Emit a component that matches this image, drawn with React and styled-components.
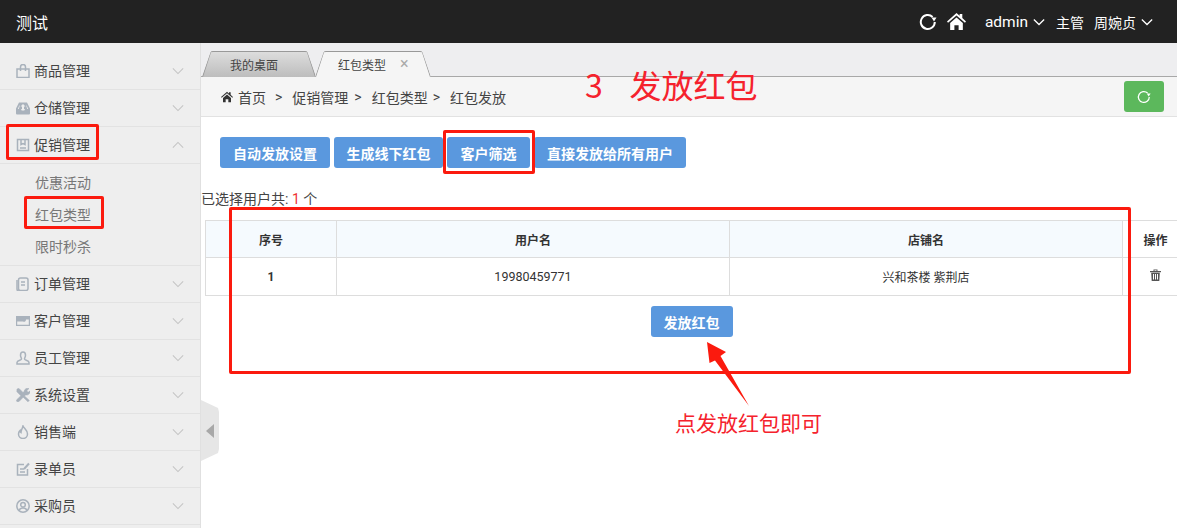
import React from "react";
import styled, { createGlobalStyle } from "styled-components";

const Global = createGlobalStyle`
  html, body { margin: 0; padding: 0; height: 528px; overflow: hidden; background: #fff; }
  * { box-sizing: border-box; }
  body { font-family: Roboto, "Noto Sans CJK SC", sans-serif; font-size: 14px; color: #333; }
`;

const Page = styled.div`position: relative; width: 1177px; height: 528px; overflow: hidden; display: flex; flex-direction: column;`;
const Header = styled.header`height: 43px; flex: none; background: #222; color: #fff; display: flex; align-items: center; padding: 0 24px 0 16px;`;
const Brand = styled.div`font-size: 16px; flex: 1;`;
const HeaderIcons = styled.div`display: flex; align-items: center; gap: 10px; margin-right: 19px;`;
const HeaderText = styled.span`display: inline-flex; align-items: center; font-size: ${p => p.$size || 14}px; margin-left: ${p => p.$gap || 0}px; gap: 5px;`;
const Body = styled.div`flex: 1; display: flex; min-height: 0;`;
const Sidebar = styled.aside`width: 201px; flex: none; background: #eee; border-right: 1px solid #e0e0e0; padding-top: 10px;`;
const MenuRow = styled.div`height: 37px; padding: 0 16px 1px 16px; display: flex; align-items: center; border-bottom: 1px solid #e2e2e2; color: #444; font-size: 14px; line-height: 1;`;
const MenuIcon = styled.svg`width: 14px; height: 14px; flex: none; margin-right: 4px; fill: none; stroke: #a9b2bc; stroke-width: 1.5;`;
const MenuLabel = styled.span`flex: 1;`;
const Chevron = styled.svg`width: ${p => p.$width || 12}px; height: 8px; fill: none; stroke: ${p => p.$c || "#c4c4c4"}; stroke-width: ${p => p.$w || 1.2}; flex: none;`;
const SubMenu = styled.div`height: 102px; padding-top: 3px; border-bottom: 1px solid #e2e2e2;`;
const SubItem = styled.div`height: 32px; line-height: 32px; padding-left: 35px; color: #777; font-size: 14px;`;
const Main = styled.main`flex: 1; min-width: 0; display: flex; flex-direction: column; position: relative;`;
const TabBar = styled.div`height: 34px; flex: none; background: #eeeef0; border-bottom: 1px solid #a8a8a8; display: flex; align-items: flex-end; padding-left: 1px; position: relative;`;
const Tab = styled.div`
  height: 26px; position: relative; display: flex; align-items: center; justify-content: ${p => p.$active ? "flex-start" : "center"};
  width: ${p => p.$active ? 116 : 114}px; margin-right: ${p => p.$active ? 0 : -1}px; margin-bottom: -1px;
  padding-left: ${p => p.$active ? 23 : 0}px; padding-right: ${p => p.$active ? 0 : 10}px; font-size: 12px; color: #444; z-index: ${p => p.$active ? 2 : 1};
  background: ${p => p.$active ? "#f5f5f5" : "linear-gradient(#dedede, #bdbdbd)"};
  clip-path: polygon(0 100%, 9px 0, calc(100% - 9px) 0, 100% 100%);
`;
const TabOutline = styled.svg`position: absolute; inset: 0; width: 100%; height: 100%; fill: none; stroke: #999;`;
const TabClose = styled.span`position: absolute; left: 85px; top: 2px; color: #aaa; font-size: 16px; line-height: 22px;`;
const Crumbs = styled.div`height: 40px; flex: none; background: #f5f5f5; border-bottom: 1px solid #e2e2e2; display: flex; align-items: center; padding: 0 13px 0 20px; color: #444; font-size: 14px;`;
const CrumbHome = styled.span`display: inline-flex; margin-right: 5px;`;
const CrumbText = styled.span`margin-right: ${p => p.$m}px; white-space: pre;`;
const Spacer = styled.div`flex: 1;`;
const GreenBtn = styled.div`width: 40px; height: 31px; background: #5cb85c; border-radius: 3px; display: flex; align-items: center; justify-content: center;`;
const Content = styled.div`flex: 1; position: relative; padding-top: 20px;`;
const Toolbar = styled.div`display: flex; gap: 4px; padding-left: 19px;`;
const Btn = styled.div`height: 31px; width: ${p => p.$w}px; background: #5a98de; color: #fff; border-radius: 3px; font-size: 14px; font-weight: 700; display: flex; align-items: center; justify-content: center;`;
const Selected = styled.div`margin-top: 22px; height: 18px; line-height: 18px; font-size: 14px; color: #444;`;
const Count = styled.span`color: #e33;`;
const TableWrap = styled.div`margin: 12px 0 0 4px; width: 985px;`;
const Table = styled.table`border-collapse: collapse; table-layout: fixed; width: 983px; font-size: 12px; color: #333;`;
const Th = styled.th`height: 37px; border: 1px solid #ddd; background: ${p => p.$plain ? "#fff" : "#f5fafe"}; font-weight: 700; font-size: 12px; padding: 0;`;
const Td = styled.td`height: 38px; border: 1px solid #ddd; text-align: center; padding: 0; font-weight: ${p => p.$bold ? 700 : 400}; font-size: ${p => p.$size || 12}px;`;
const SendRow = styled.div`display: flex; justify-content: center; width: 973px; margin: 10px 0 0 0;`;
const Collapse = styled.div`position: absolute; left: 0; top: 357px; width: 18px; height: 61px; background: #e6e6e6; clip-path: polygon(0 0, 17px 8px, 18px 12px, 18px 49px, 17px 53px, 0 61px); display: flex; align-items: center; padding-left: 5px;`;
const CollapseArrow = styled.div`width: 0; height: 0; border-style: solid; border-width: 7px 8px 7px 0; border-color: transparent #a8a8a8 transparent transparent;`;

const RedBox = styled.div`position: absolute; left: ${p => p.$x}px; top: ${p => p.$y}px; width: ${p => p.$w}px; height: ${p => p.$h}px; border: 3px solid #fb1a0e; border-radius: 2px; pointer-events: none; z-index: 5;`;
const Note = styled.div`position: absolute; left: ${p => p.$x}px; top: ${p => p.$y}px; color: #f5222d; font-size: ${p => p.$s}px; line-height: 1; white-space: pre; word-spacing: -0.5px; font-family: "Noto Sans CJK SC", sans-serif; z-index: 5;`;
const Arrow = styled.svg`position: absolute; left: 700px; top: 335px; width: 60px; height: 80px; z-index: 5; fill: #fb1a0e; stroke: none;`;

const icons = {
  bag: <><rect x="1" y="5" width="12" height="8.500" /><path d="M4.500 7V3a2.500 2.500 0 0 1 5 0v4" /></>,
  inbox: <path fill="#a9b2bc" stroke="none" fillRule="evenodd" d="M3 1.500h8l3 6v5a1 1 0 0 1-1 1H1a1 1 0 0 1-1-1v-5zM7 3L4.500 5.500h1.500V8h2V5.500h1.500zM1.800 8l1.500-3.500h.5L2.800 8H5l.7 1.500h2.600L9 8h2.200l-1-3.500h.5L12.200 8z" />,
  book: <><rect x="1.500" y="1.500" width="11" height="11" /><path d="M5 1.500v5l2-1 2 1v-5M4 10h6" /></>,
  doc: <><rect x="2.500" y="1" width="9.500" height="12.500" rx="2" /><path d="M1 3v9a2 2 0 0 0 2 2M5 5h4M5 8h4" /></>,
  card: <path fill="#a9b2bc" stroke="none" d="M0 2h14v10H0zM1.200 5.500v5.300h11.600V5.500H10a2 2 0 0 1-3 2H1.200z" />,
  user: <><path d="M4.500 4.200a2.500 3.200 0 0 1 5 0c0 1.800-1 2.600-1 3.800 0 1.300 4.500 1.200 4.500 3.500v1.500H1v-1.500C1 9.200 5.500 9.300 5.500 8c0-1.200-1-2-1-3.800z" /></>,
  tools: <path fill="#a9b2bc" stroke="#a9b2bc" strokeWidth="0.600" d="M1 1l2-.5 4 4 1.200-1.200A3.500 3.500 0 0 1 13 .5L10.800 2.700l.5 1 1.300.4L14 3a3.500 3.500 0 0 1-4.300 3.900L8.500 8l4.800 4.500-1.300 1.300L7.200 9.200 3 13.500 1 13.800.5 12l4.400-4.300-4-4z" />,
  fire: <path d="M7 1c1 2.500 4.500 4 4.500 8A4.500 4.500 0 0 1 7 13.500 4.500 4.500 0 0 1 2.500 9c0-1.800.8-2.800 1.500-3.500 0 1 .5 1.700 1 2C5 5 6.500 3.500 7 1z" />,
  edit: <><path d="M11.500 7v6h-10V2.500H8M4 7h4M4 10h5" /><path d="M8 7l5-5.500" strokeWidth="2" /></>,
  circle: <><circle cx="7" cy="7" r="6.200" /><circle cx="7" cy="5.700" r="2.300" /><path d="M3 11.500c.7-2 2-2.600 4-2.600s3.300.6 4 2.600" /></>,
};

const Down = () => <Chevron viewBox="0 0 14 9"><path d="M1 1.500l6 6 6-6" /></Chevron>;
const Up = () => <Chevron viewBox="0 0 14 9"><path d="M1 7.500l6-6 6 6" /></Chevron>;
const HeaderChevron = () => <Chevron viewBox="0 0 14 9" $c="#fff" $w={1.500}><path d="M1 1.500l6 6 6-6" /></Chevron>;

const Row = ({ icon, label, up }) => (
  <MenuRow>
    <MenuIcon viewBox="0 0 14 14">{icons[icon]}</MenuIcon>
    <MenuLabel>{label}</MenuLabel>
    {up ? <Up /> : <Down />}
  </MenuRow>
);

const Home = ({ width, height, color }) => (
  <svg width={width} height={height} viewBox="0 0 18 16" fill={color}>
    <path d="M9 0l3 2.600V1h2.500v3.800L18 8l-1 1.100L9 2.200 1 9.100 0 8z" />
    <path d="M3 9.400L9 4.200l6 5.200V16h-4v-4.500H7V16H3z" />
  </svg>
);
const Refresh = ({ size, color, w = 2 }) => (
  <svg width={size} height={size} viewBox="0 0 18 18" fill="none" stroke={color} strokeWidth={w}>
    <path d="M15.800 9A7 7 0 1 1 13.600 3.900" />
    <path d="M12.500 4.500L17.500 4.500 15 8.500z" strokeWidth="0" fill={color} />
  </svg>
);
const Trash = () => (
  <svg width="11" height="12" viewBox="0 0 11 12" fill="#555">
    <path d="M0 2h11v1.200H0zM3.500 2V.5h4V2h-1V1.300h-2V2zM1.200 3.700h8.600l-.5 8.300H1.700zM3 5v5.500h1V5zm2 0v5.500h1V5zm2 0v5.500h1V5z" />
  </svg>
);

export default function App() {
  return (
    <Page>
      <Global />
      <Header>
        <Brand>测试</Brand>
        <HeaderIcons>
          <Refresh size={18} color="#fff" />
          <Home width={19} height={17} color="#fff" />
        </HeaderIcons>
        <HeaderText $size={15.500}>admin<HeaderChevron /></HeaderText>
        <HeaderText $gap={11}>主管</HeaderText>
        <HeaderText $gap={10}>周婉贞<HeaderChevron /></HeaderText>
      </Header>
      <Body>
        <Sidebar>
          <Row icon="bag" label="商品管理" />
          <Row icon="inbox" label="仓储管理" />
          <Row icon="book" label="促销管理" up />
          <SubMenu>
            <SubItem>优惠活动</SubItem>
            <SubItem>红包类型</SubItem>
            <SubItem>限时秒杀</SubItem>
          </SubMenu>
          <Row icon="doc" label="订单管理" />
          <Row icon="card" label="客户管理" />
          <Row icon="user" label="员工管理" />
          <Row icon="tools" label="系统设置" />
          <Row icon="fire" label="销售端" />
          <Row icon="edit" label="录单员" />
          <Row icon="circle" label="采购员" />
        </Sidebar>
        <Main>
          <TabBar>
            <Tab>我的桌面
              <TabOutline viewBox="0 0 114 26" preserveAspectRatio="none"><path d="M0.500 26L8.500 1.500Q9 0.500 11 0.500H103Q105 0.500 105.500 1.500L113.500 26" /></TabOutline>
            </Tab>
            <Tab $active>红包类型
              <TabClose>×</TabClose>
              <TabOutline viewBox="0 0 116 26" preserveAspectRatio="none"><path d="M0.500 26L8.500 1.500Q9 0.500 11 0.500H105Q107 0.500 107.500 1.500L115.500 26" /></TabOutline>
            </Tab>
          </TabBar>
          <Crumbs>
            <CrumbHome><Home width={12} height={12} color="#333" /></CrumbHome>
            <CrumbText $m={9}>首页</CrumbText>
            <CrumbText $m={10}>&gt;</CrumbText>
            <CrumbText $m={6}>促销管理</CrumbText>
            <CrumbText $m={10}>&gt;</CrumbText>
            <CrumbText $m={5}>红包类型</CrumbText>
            <CrumbText $m={10}>&gt;</CrumbText>
            <CrumbText $m={0}>红包发放</CrumbText>
            <Spacer />
            <GreenBtn><Refresh size={14} color="#fff" w={1.600} /></GreenBtn>
          </Crumbs>
          <Content>
            <Toolbar>
              <Btn $w={110}>自动发放设置</Btn>
              <Btn $w={109}>生成线下红包</Btn>
              <Btn $w={83}>客户筛选</Btn>
              <Btn $w={152}>直接发放给所有用户</Btn>
            </Toolbar>
            <Selected>已选择用户共: <Count>1</Count> 个</Selected>
            <TableWrap>
              <Table>
                <colgroup>
                  <col style={{ width: 131 }} />
                  <col style={{ width: 393 }} />
                  <col style={{ width: 393 }} />
                  <col style={{ width: 66 }} />
                </colgroup>
                <thead>
                  <tr>
                    <Th>序号</Th>
                    <Th>用户名</Th>
                    <Th>店铺名</Th>
                    <Th $plain>操作</Th>
                  </tr>
                </thead>
                <tbody>
                  <tr>
                    <Td $bold>1</Td>
                    <Td $size={12.500}>19980459771</Td>
                    <Td>兴和茶楼 紫荆店</Td>
                    <Td><Trash /></Td>
                  </tr>
                </tbody>
              </Table>
              <SendRow><Btn $w={82}>发放红包</Btn></SendRow>
            </TableWrap>
          </Content>
          <Collapse><CollapseArrow /></Collapse>
        </Main>
      </Body>
      <RedBox $x={6} $y={124} $w={93} $h={36} />
      <RedBox $x={24} $y={196} $w={80} $h={33} />
      <RedBox $x={443} $y={130} $w={92} $h={44} />
      <RedBox $x={229} $y={207} $w={902} $h={167} />
      <Note $x={585} $y={68} $s={32}>3    发放红包</Note>
      <Note $x={675} $y={412} $s={21}>点发放红包即可</Note>
      <Arrow viewBox="0 0 60 80"><path d="M7 7L26 17 20.500 21 49 71 15 25.500 9.500 28z" /></Arrow>
    </Page>
  );
}
